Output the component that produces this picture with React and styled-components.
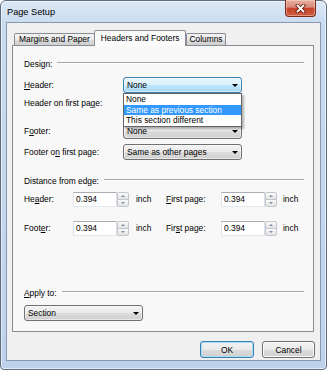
import React from "react";
import styled, { createGlobalStyle } from "styled-components";

const GlobalStyle = createGlobalStyle`
  html, body {
    margin: 0;
    padding: 0;
    background: #ffffff;
  }
  body {
    font-family: "Liberation Sans", Arial, sans-serif;
    font-size: 8.4px;
    color: #000;
  }
`;

const Window = styled.div`
  width: 327px;
  height: 370px;
  box-sizing: border-box;
  border: 1px solid #5d6e81;
  border-radius: 6px 6px 4px 4px;
  background: linear-gradient(180deg, #dce8f6 0, #c9dbef 24px, #bed3eb 100%);
  box-shadow: inset 0 0 0 1px rgba(255, 255, 255, 0.55);
  display: flex;
  flex-direction: column;
  padding: 0 5px 8px 5px;
`;

const TitleBar = styled.div`
  height: 21px;
  margin: 0 -5px;
  padding: 0 10px 0 6px;
  display: flex;
  align-items: flex-start;
`;

const Title = styled.div`
  font-size: 9.2px;
  line-height: 12px;
  padding-top: 5px;
  color: #000;
`;

const CloseButton = styled.div`
  margin-left: auto;
  margin-top: -1px;
  width: 31px;
  height: 17px;
  box-sizing: border-box;
  border: 1px solid #7a2b1f;
  border-top: none;
  border-radius: 0 0 4px 4px;
  background: linear-gradient(180deg, #eab0a1 0%, #d9897a 45%, #c4432a 52%, #cf5c40 100%);
  box-shadow: inset 0 0 0 1px rgba(255, 220, 210, 0.45);
  display: flex;
  align-items: center;
  justify-content: center;
`;

const Client = styled.div`
  flex: 1;
  box-sizing: border-box;
  border: 1px solid #8799b0;
  background: #f0f0f0;
  padding: 7px 0 0 5px;
  display: flex;
  flex-direction: column;
`;

const TabStrip = styled.div`
  display: flex;
  align-items: flex-end;
  height: 15px;
  padding-left: 2px;
`;

const Tab = styled.div`
  box-sizing: border-box;
  border: 1px solid #898c95;
  border-bottom: none;
  border-radius: 2px 2px 0 0;
  line-height: 11px;
  white-space: nowrap;
  padding: ${(p) => (p.$active ? "2px 6px 0" : `0 ${p.$pad || 4}px`)};
  height: ${(p) => (p.$active ? "16px" : "12px")};
  margin-bottom: ${(p) => (p.$active ? "-1px" : "0")};
  margin-left: ${(p) => (p.$active ? "-1px" : "0")};
  background: ${(p) =>
    p.$active ? "#fbfbfb" : "linear-gradient(180deg, #f2f2f2 0%, #ebebeb 50%, #dddddd 51%, #cfcfcf 100%)"};
  position: relative;
  z-index: ${(p) => (p.$active ? 2 : 1)};
`;

const Panel = styled.div`
  width: 302px;
  height: 287px;
  box-sizing: border-box;
  border: 1px solid #898c95;
  background: #f8f8f8;
  padding: 12px 9px 0 11px;
  display: flex;
  flex-direction: column;
`;

const SectionHead = styled.div`
  display: flex;
  height: 12px;
  line-height: 12px;
  margin-top: ${(p) => p.$top || 0}px;
  white-space: nowrap;

  &::after {
    content: "";
    flex: 1;
    margin-left: 5px;
    margin-top: 4px;
    height: 0;
    border-top: 1px solid #a6a6a6;
    border-bottom: 1px solid #ffffff;
  }
`;

const FieldRow = styled.div`
  display: flex;
  align-items: center;
  height: 16px;
  margin-top: ${(p) => p.$top || 0}px;
  position: relative;
  z-index: ${(p) => p.$z || 0};
`;

const FieldLabel = styled.div`
  width: ${(p) => p.$w}px;
  flex: none;
  white-space: nowrap;
  line-height: 12px;
`;

const Select = styled.div`
  width: 119px;
  height: 16px;
  box-sizing: border-box;
  border: 1px solid ${(p) => (p.$active ? "#3c7fb1" : "#707070")};
  border-radius: 3px;
  background: ${(p) =>
    p.$active
      ? "linear-gradient(180deg, #eaf6fd 0%, #d9f0fc 50%, #bee6fd 51%, #a7d9f5 100%)"
      : "linear-gradient(180deg, #f2f2f2 0%, #ebebeb 50%, #dddddd 51%, #cfcfcf 100%)"};
  box-shadow: inset 0 0 0 1px rgba(255, 255, 255, 0.5);
  padding-left: 3px;
  display: flex;
  align-items: center;
  line-height: 12px;
  position: relative;
  white-space: nowrap;
`;

const Arrow = styled.span`
  margin-left: auto;
  margin-right: 3px;
  width: 0;
  height: 0;
  border-left: 3px solid transparent;
  border-right: 3px solid transparent;
  border-top: 3px solid #000;
  margin-top: 1px;
`;

const Popup = styled.div`
  position: absolute;
  left: -1px;
  right: -1px;
  top: calc(100% + 1px);
  background: #fff;
  border: 1px solid #646464;
  box-shadow: 2px 2px 2px rgba(0, 0, 0, 0.28);
  z-index: 5;
`;

const PopupItem = styled.div`
  height: 10.5px;
  line-height: 10.5px;
  padding-left: 2px;
  white-space: nowrap;
  background: ${(p) => (p.$selected ? "#3399ff" : "transparent")};
  color: ${(p) => (p.$selected ? "#fff" : "#000")};
`;

const SpinBox = styled.div`
  width: 56px;
  height: 15px;
  display: flex;
  flex: none;
`;

const SpinInput = styled.div`
  flex: 1;
  box-sizing: border-box;
  border: 1px solid;
  border-color: #abadb3 #dbdfe6 #e3e9ef #e2e3ea;
  background: #fff;
  padding-left: 2px;
  line-height: 13px;
`;

const SpinButtons = styled.div`
  width: 12px;
  display: flex;
  flex-direction: column;
`;

const SpinButton = styled.div`
  flex: 1;
  box-sizing: border-box;
  border: 1px solid #c3c6cc;
  margin-top: ${(p) => (p.$down ? "-1px" : "0")};
  border-radius: ${(p) => (p.$down ? "0 0 2px 2px" : "2px 2px 0 0")};
  background: linear-gradient(180deg, #fbfbfb 0%, #eeeeee 50%, #e2e2e2 100%);
  display: flex;
  align-items: center;
  justify-content: center;

  &::after {
    content: "";
    width: 0;
    height: 0;
    border-left: 2px solid transparent;
    border-right: 2px solid transparent;
    ${(p) => (p.$down ? "border-top: 2px solid #7d8ea8;" : "border-bottom: 2px solid #7d8ea8;")}
  }
`;

const Unit = styled.div`
  margin-left: ${(p) => p.$ml}px;
  width: ${(p) => p.$w}px;
  flex: none;
  line-height: 12px;
`;

const ButtonRow = styled.div`
  display: flex;
  justify-content: flex-end;
  gap: 8px;
  margin-top: 9px;
  padding-right: 5px;
`;

const Button = styled.div`
  width: ${(p) => p.$w}px;
  height: 17px;
  box-sizing: border-box;
  border: 1px solid ${(p) => (p.$default ? "#3c7fb1" : "#707070")};
  border-radius: 3px;
  background: linear-gradient(180deg, #f2f2f2 0%, #ebebeb 50%, #dddddd 51%, #cfcfcf 100%);
  box-shadow: inset 0 0 0 1px ${(p) => (p.$default ? "#a9dcf6" : "#fcfcfc")};
  display: flex;
  align-items: center;
  justify-content: center;
  line-height: 12px;
`;

const CloseGlyph = () => (
  <svg width="11" height="9" viewBox="0 0 11 9">
    <path d="M2.5 1.5 L8.5 7.5 M8.5 1.5 L2.5 7.5" stroke="#5b1a10" strokeWidth="3.4" strokeLinecap="square" />
    <path d="M2.5 1.5 L8.5 7.5 M8.5 1.5 L2.5 7.5" stroke="#ffffff" strokeWidth="1.8" strokeLinecap="square" />
  </svg>
);

const Spin = ({ value }) => (
  <SpinBox>
    <SpinInput>{value}</SpinInput>
    <SpinButtons>
      <SpinButton />
      <SpinButton $down />
    </SpinButtons>
  </SpinBox>
);

export default function App() {
  return (
    <>
      <GlobalStyle />
      <Window>
        <TitleBar>
          <Title>Page Setup</Title>
          <CloseButton>
            <CloseGlyph />
          </CloseButton>
        </TitleBar>
        <Client>
          <TabStrip>
            <Tab>Margins and Paper</Tab>
            <Tab $active>Headers and Footers</Tab>
            <Tab $pad={2}>Columns</Tab>
          </TabStrip>
          <Panel>
            <SectionHead>Design:</SectionHead>

            <FieldRow $top={7} $z={3}>
              <FieldLabel $w={99}>
                <u>H</u>eader:
              </FieldLabel>
              <Select $active>
                None
                <Arrow />
                <Popup>
                  <PopupItem>None</PopupItem>
                  <PopupItem $selected>Same as previous section</PopupItem>
                  <PopupItem>This section different</PopupItem>
                </Popup>
              </Select>
            </FieldRow>

            {/* its drop-down lies under the open list above */}
            <FieldRow $top={2}>
              <FieldLabel $w={99}>
                Header on first pa<u>g</u>e:
              </FieldLabel>
              <Select>
                <Arrow />
              </Select>
            </FieldRow>

            <FieldRow $top={12}>
              <FieldLabel $w={99}>
                F<u>o</u>oter:
              </FieldLabel>
              <Select>
                None
                <Arrow />
              </Select>
            </FieldRow>

            <FieldRow $top={5}>
              <FieldLabel $w={99}>
                Footer o<u>n</u> first page:
              </FieldLabel>
              <Select>
                Same as other pages
                <Arrow />
              </Select>
            </FieldRow>

            <SectionHead $top={15}>Distance from edge:</SectionHead>

            <FieldRow $top={4}>
              <FieldLabel $w={49}>
                He<u>a</u>der:
              </FieldLabel>
              <Spin value="0.394" />
              <Unit $ml={7} $w={30}>inch</Unit>
              <FieldLabel $w={55}>
                <u>F</u>irst page:
              </FieldLabel>
              <Spin value="0.394" />
              <Unit $ml={6} $w={20}>inch</Unit>
            </FieldRow>

            <FieldRow $top={13}>
              <FieldLabel $w={49}>
                Foot<u>e</u>r:
              </FieldLabel>
              <Spin value="0.394" />
              <Unit $ml={7} $w={30}>inch</Unit>
              <FieldLabel $w={55}>
                Fir<u>s</u>t page:
              </FieldLabel>
              <Spin value="0.394" />
              <Unit $ml={6} $w={20}>inch</Unit>
            </FieldRow>

            <SectionHead $top={51}>
              <span>
                <u>A</u>pply to:
              </span>
            </SectionHead>

            <FieldRow $top={6}>
              <Select>
                Section
                <Arrow />
              </Select>
            </FieldRow>
          </Panel>
          <ButtonRow>
            <Button $default $w={54}>
              OK
            </Button>
            <Button $w={53}>Cancel</Button>
          </ButtonRow>
        </Client>
      </Window>
    </>
  );
}
